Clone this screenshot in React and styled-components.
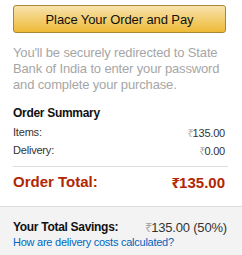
import React from "react";
import styled, { createGlobalStyle } from "styled-components";

const Global = createGlobalStyle`
  html, body { margin: 0; padding: 0; background: #fff; }
  body { font-family: "Liberation Sans", Arial, sans-serif; }
`;

const Box = styled.div`
  width: 242px;
  height: 255px;
  display: flex;
  flex-direction: column;
  overflow: hidden;
`;

const Top = styled.div`
  padding: 5px 17px 0 13px;
  display: flex;
  flex-direction: column;
`;

const PayButton = styled.button`
  height: 28px;
  width: 213px;
  border: 1px solid #a88734;
  border-radius: 3px;
  background: linear-gradient(to bottom, #f8e3ad, #eeba37);
  font-family: inherit;
  font-size: 13px;
  letter-spacing: -0.1px;
  color: #111;
  padding: 0;
  cursor: pointer;
`;

const Note = styled.p`
  margin: 12px 0 0;
  font-size: 13px;
  line-height: 16px;
  letter-spacing: -0.15px;
  color: #a6a6a6;
`;

const Heading = styled.h3`
  margin: 13px 0 4px;
  font-size: 12px;
  line-height: 14px;
  letter-spacing: -0.3px;
  font-weight: bold;
  color: #111;
`;

const Row = styled.div`
  display: flex;
  justify-content: space-between;
  font-size: 11px;
  line-height: 17px;
  letter-spacing: -0.2px;
  color: #333;
  white-space: nowrap;
`;

const Divider = styled.hr`
  margin: 6px -3px 6px 0;
  border: 0;
  border-top: 1px solid #ddd;
`;

const TotalRow = styled(Row)`
  font-size: 15px;
  font-weight: bold;
  color: #b12704;
  line-height: 18px;
  letter-spacing: 0;
`;

const Rupee = styled.span`
  font-family: "Noto Sans", "DejaVu Sans", sans-serif;
  font-weight: ${(p) => (p.$bold ? "bold" : "normal")};
  color: ${(p) => p.$color || "#aaa"};
  margin-right: -1px;
`;

const Savings = styled.div`
  margin-top: 14px;
  flex: 1;
  background: #f3f3f3;
  border-top: 1px solid #ddd;
  padding: 12px 8px 0 13px;
`;

const SaveLine = styled.div`
  display: grid;
  grid-template-columns: 132px 1fr;
  font-size: 13px;
  line-height: 16px;
  letter-spacing: -0.2px;
  color: #333;
  white-space: nowrap;
`;

const Label = styled.span`
  font-size: 12px;
  font-weight: bold;
  letter-spacing: -0.3px;
  color: #111;
`;

const Link = styled.a`
  display: block;
  font-size: 11px;
  line-height: 13px;
  letter-spacing: -0.25px;
  color: #0066c0;
  text-decoration: none;
`;

export default function App() {
  return (
    <Box>
      <Global />
      <Top>
        <PayButton>Place Your Order and Pay</PayButton>
        <Note>
          You'll be securely redirected to State Bank of India to enter your
          password and complete your purchase.
        </Note>
        <Heading>Order Summary</Heading>
        <Row>
          <span>Items:</span>
          <span>
            <Rupee>₹</Rupee>135.00
          </span>
        </Row>
        <Row>
          <span>Delivery:</span>
          <span>
            <Rupee>₹</Rupee>0.00
          </span>
        </Row>
        <Divider />
        <TotalRow>
          <span>Order Total:</span>
          <span>
            <Rupee $bold $color="#b12704">₹</Rupee>135.00
          </span>
        </TotalRow>
      </Top>
      <Savings>
        <SaveLine>
          <Label>Your Total Savings:</Label>
          <span>
            <Rupee>₹</Rupee>135.00 (50%)
          </span>
        </SaveLine>
        <Link href="#">How are delivery costs calculated?</Link>
      </Savings>
    </Box>
  );
}
